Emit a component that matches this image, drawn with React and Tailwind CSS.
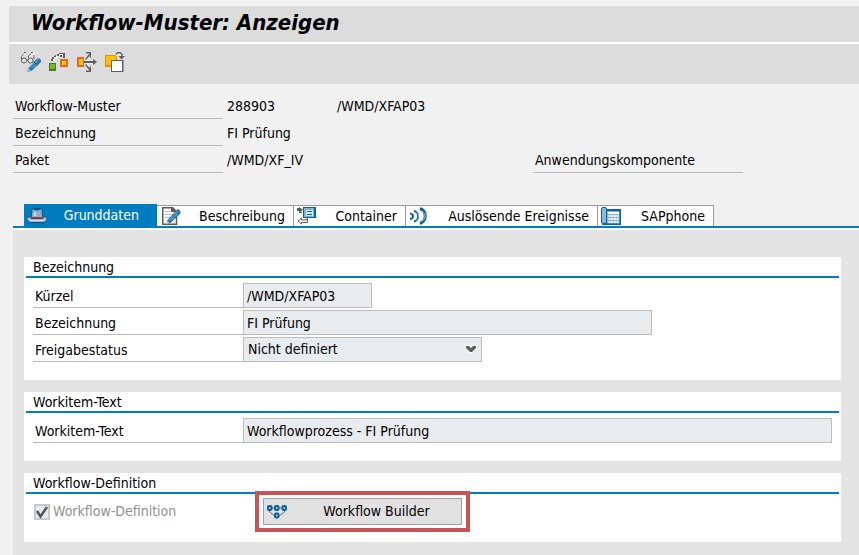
import React, { useState } from "react";

const GlassesPencilIcon = () => (
  <svg width="20" height="20" viewBox="0 0 20 20" fill="none">
    <path d="M1 7V4L3.500 1H5M9 7V4L11 1H13V5" stroke="#f4f4f4" strokeWidth="2" />
    <circle cx="3" cy="8.500" r="2.500" fill="#e8e8e8" stroke="#5a5a5a" />
    <circle cx="9.500" cy="8.500" r="2.500" fill="#e8e8e8" stroke="#5a5a5a" />
    <path d="M.5 8V4.500L3 1.500M3 .5h2M7 8H5.500M7.500 6V4L10 1.500M10 .5h2M13 3v4" stroke="#5a5a5a" />
    <path d="M6 20l1.500-4L16 6.500h2.500L20 8v2L11 18.500z" fill="#2c78a8" />
    <path d="M9 15.500l8-8M11.500 16l4-4" stroke="#7db4d8" />
    <path d="M6 20l1.500-3.500L9.500 18z" fill="#a9cbe0" />
    <path d="M12.500 9.500l4 4" stroke="#1d5f8c" />
  </svg>
);

const WhereUsedIcon = () => (
  <svg width="20" height="20" viewBox="0 0 20 20" fill="none" shapeRendering="crispEdges">
    <path d="M3 8h2v-2h2V4h2M10 2h5M12 4h1" stroke="#f4f4f4" />
    <path d="M2 7h2v2H2zM3 5h2v2H3zM5 4h2v1H5zM6 3h1v1H6zM8 2h2v2H8zM10 1h6v1h-6zM14 2h2v4h-2zM11 3h2v2h-2z" fill="#5f5f5f" />
    <path d="M0 11h7v8H0z" fill="#3d7a35" />
    <path d="M1 12h5v5H1z" fill="#7ab51d" />
    <path d="M11 7h8v8h-8z" fill="#de6a26" />
    <path d="M13 9h4v4h-4z" fill="#fdc316" />
  </svg>
);

const DistributeIcon = () => (
  <svg width="20" height="20" viewBox="0 0 20 20" fill="none">
    <path d="M8 8l5-6M8 12l5 6M8 10h9" stroke="#f4f4f4" strokeWidth="3" />
    <path d="M0 5h7v10H0z" fill="#de6a26" />
    <path d="M2 7h4v6H2z" fill="#fdc316" />
    <path d="M8.500 7.500L13 2M8.500 12.500L13 18" stroke="#5f5f5f" strokeWidth="1.500" />
    <path d="M7 9h9v2H7z" fill="#5f5f5f" />
    <path d="M9 0h5v5.500h-1.500V1.500H9zM9 20h5v-5.500h-1.500v4H9zM16 7l4 3-4 3z" fill="#5f5f5f" />
  </svg>
);

const CopyObjectIcon = () => (
  <svg width="20" height="20" viewBox="0 0 20 20" fill="none">
    <path d="M0 3h12v12H0z" fill="#f08a00" />
    <path d="M1 4h10v9H1z" fill="#fdc300" />
    <path d="M11 3.500l1.500-2h3L17 3v2" stroke="#f4f4f4" strokeWidth="3" />
    <path d="M11 2.500L12.500.750h3L17 2.500V5" stroke="#5f5f5f" strokeWidth="1.500" />
    <path d="M13.500 4H20l-3.500 3.500z" fill="#5f5f5f" />
    <path d="M6 8h12.500v12H6z" fill="#5f5f5f" />
    <path d="M7 9h10v10H7z" fill="#fff" />
  </svg>
);

const HatIcon = () => (
  <svg width="20" height="18" viewBox="0 0 20 18" fill="none">
    <path d="M0 11l2-1.500 3 1h10l3-1 2 1.500v2l-3 2.500H3L0 13z" fill="#8fb9d8" stroke="#0b4f7d" />
    <path d="M4 11.500L5 3l1-1.500h8L15 3l1 8.500z" fill="#86b3d4" stroke="#0b4f7d" />
    <path d="M6 1.500c1 2.500 7 2.500 8 0z" fill="#0b4f7d" />
    <path d="M8 5v4" stroke="#c5dff0" strokeWidth="2" />
    <path d="M4 9l1 1h10l1-1v2.500H4z" fill="#c8321e" />
    <path d="M1.500 12.500L4 13.500h12l2.500-1" stroke="#d5e6f2" />
  </svg>
);

const DocPencilIcon = () => (
  <svg width="20" height="18" viewBox="0 0 20 18" fill="none">
    <path d="M.75.75H10.500L14.500 5v12.250H.75z" fill="#fff" stroke="#5a5a5a" strokeWidth="1.500" />
    <path d="M9 0h2l4.500 5H9z" fill="#5a5a5a" />
    <path d="M3 4.500h5M3 7.500h6M3 10.500h5" stroke="#b5b5b5" />
    <path d="M4 17.500L5.500 13 14 3.500l2-1.500L18.500 4v2.500L8.500 16z" fill="#2c78a8" />
    <path d="M7 13.500l8-9M9.500 13l6-6" stroke="#7db4d8" />
    <path d="M4 17.500l1.300-3.500 2.200 2z" fill="#b9d4e6" />
    <path d="M10 7.500l4 4" stroke="#1d5f8c" />
  </svg>
);

const ContainerIcon = () => (
  <svg width="20" height="18" viewBox="0 0 20 18" fill="none">
    <path d="M6 0h13v11H6z" fill="#0b6397" />
    <path d="M7 1h10v9H7z" fill="#86b3d4" />
    <path d="M9 3h7v6H9z" fill="#d6e7f3" />
    <path d="M10 4h5v1h-5zM10 7h5v1h-5z" fill="#0b6397" />
    <path d="M0 1h2V0l4 2.750L2 6V4H0zM2 5h3v1H2z" fill="#5a5a5a" />
    <path d="M1 14l3.500-3v2H9l1.500-1.500v4H4.500v1.500z" fill="#fff" stroke="#5a5a5a" />
  </svg>
);

const EventsIcon = () => (
  <svg width="20" height="18" viewBox="0 0 20 18" fill="none">
    <path d="M0 6.500c4 .5 4 5 0 5.500M4 4c5.500 1 5.500 9.500 0 10.500" stroke="#0b6397" strokeWidth="2" />
    <path d="M10 1.500c7 3 7 12 0 15" stroke="#0b6397" strokeWidth="3" />
    <path d="M6.500 4.500c3 3 3 6.500 0 9.500M12 4c4 3.500 4 7 0 10.500" stroke="#a2c5e0" />
  </svg>
);

const PhoneIcon = () => (
  <svg width="20" height="18" viewBox="0 0 20 18" fill="none">
    <path d="M4 2h16v16H1z" fill="#0b6397" />
    <path d="M6 4h12.500v12.500H6z" fill="#86b3d4" />
    <rect x=".5" y=".5" width="5" height="16" rx="1.500" fill="#8fb9d8" stroke="#0b6397" />
    <path d="M7 5h11v2H7z" fill="#fff" />
    <path d="M7.500 9h10M7.500 12h10M7.500 15h10" stroke="#fff" strokeWidth="2" strokeDasharray="2 .666" />
  </svg>
);

const WorkflowIcon = () => (
  <svg width="20" height="16" viewBox="0 0 20 16" fill="none">
    <path d="M2.500 4H18M2.500 5v3L8 12M17.500 5v3L12 12" stroke="#6b6b6b" />
    <g fill="#a2cbe6" stroke="#0b6397" strokeWidth="2">
      <rect x="1" y="2" width="3.500" height="4" rx="1" />
      <rect x="8" y="2" width="3.500" height="4" rx="1" />
      <rect x="15.500" y="2" width="3.500" height="4" rx="1" />
      <rect x="8" y="9.500" width="3.500" height="4" rx="1" />
    </g>
  </svg>
);

const toolbar = [
  { label: "Anzeigen <-> Ändern", icon: <GlassesPencilIcon /> },
  { label: "Verwendungsnachweis", icon: <WhereUsedIcon /> },
  { label: "Verteilen", icon: <DistributeIcon /> },
  { label: "Kopieren", icon: <CopyObjectIcon /> },
];

const tabs = [
  { id: "grund", label: "Grunddaten", icon: <HatIcon />, width: "w-[133px] pl-[3px] pr-[18px]" },
  { id: "beschr", label: "Beschreibung", icon: <DocPencilIcon />, width: "w-[137px] pl-[5px] pr-2" },
  { id: "cont", label: "Container", icon: <ContainerIcon />, width: "w-[112px] pl-[3px] pr-2" },
  { id: "events", label: "Auslösende Ereignisse", icon: <EventsIcon />, width: "w-[192px] pl-1 pr-2" },
  { id: "phone", label: "SAPphone", icon: <PhoneIcon />, width: "w-[116px] pl-[3px] pr-2" },
];

const HeaderLabel = ({ children }) => (
  <div className="h-[26px] w-[210px] shrink-0 border-b border-[#b9b9b9] pl-[2px]">{children}</div>
);

const Panel = ({ title, children }) => (
  <section className="bg-white pb-[18px]">
    <h2 className="mx-[2px] h-[21px] border-b-2 border-[#007cc0] pl-[7px] leading-[20px]">{title}</h2>
    <div className="flex flex-col gap-[2px] px-[9px] pt-[5px]">{children}</div>
  </section>
);

const Row = ({ id, label, children }) => (
  <div className="flex h-[25px]">
    <label
      htmlFor={id}
      className="w-[210px] shrink-0 border-b border-[#b9b9b9] pl-[2px] leading-[26px]"
    >
      {label}
    </label>
    {children}
  </div>
);

const inputClass = "h-[25px] min-w-0 border border-[#bdbdbd] bg-[#e8ecef] px-[3px] outline-none";

const App = () => {
  const [activeTab, setActiveTab] = useState("grund");

  return (
    <div className="flex min-h-screen flex-col bg-[#f1f1f1] font-['DejaVu_Sans_Condensed','Noto_Sans',sans-serif] text-[14px] text-black">
      <header className="mt-[6px] ml-[9px]">
        <div className="h-9 bg-[#dcdcdc] pl-[22px]">
          <h1 className="text-[22px] leading-[34px] font-bold italic">Workflow-Muster: Anzeigen</h1>
        </div>
        <div className="flex h-[42px] items-center gap-2 border-t-2 border-white bg-[#dcdcdc] pb-1 pl-3">
          {toolbar.map((item) => (
            <button key={item.label} type="button" title={item.label} aria-label={item.label}>
              {item.icon}
            </button>
          ))}
        </div>
      </header>

      <div className="mt-[9px] ml-[13px] flex flex-col gap-px leading-[27px]">
        <div className="flex h-[26px]">
          <HeaderLabel>Workflow-Muster</HeaderLabel>
          <span className="w-[110px] pl-1">288903</span>
          <span className="pl-1">/WMD/XFAP03</span>
        </div>
        <div className="flex h-[26px]">
          <HeaderLabel>Bezeichnung</HeaderLabel>
          <span className="pl-1">FI Prüfung</span>
        </div>
        <div className="flex h-[26px]">
          <HeaderLabel>Paket</HeaderLabel>
          <span className="w-[310px] pl-1">/WMD/XF_IV</span>
          <HeaderLabel>Anwendungskomponente</HeaderLabel>
        </div>
      </div>

      <div role="tablist" className="mt-[31px] ml-[13px] flex items-end border-b-2 border-[#007cc0] pl-[11px]">
        {tabs.map((tab) => (
          <button
            key={tab.id}
            type="button"
            role="tab"
            aria-selected={activeTab === tab.id}
            onClick={() => setActiveTab(tab.id)}
            className={`flex items-center justify-between leading-[21px] whitespace-nowrap ${tab.width} ${
              activeTab === tab.id
                ? "h-[22px] bg-[#007cc0] pt-px text-white"
                : "h-[21px] border-t border-r border-[#9b9b9b] bg-white"
            }`}
          >
            {tab.icon}
            <span>{tab.label}</span>
          </button>
        ))}
      </div>

      <main className="ml-[13px] flex flex-1 flex-col gap-3 border-t-2 border-white bg-[#e4e4e4] pt-[27px] pr-[18px] pb-[13px] pl-[11px]">
        <Panel title="Bezeichnung">
          <Row id="kuerzel" label="Kürzel">
            <input id="kuerzel" readOnly value="/WMD/XFAP03" className={`${inputClass} w-[129px]`} />
          </Row>
          <Row id="bezeichnung" label="Bezeichnung">
            <input id="bezeichnung" readOnly value="FI Prüfung" className={`${inputClass} w-[409px]`} />
          </Row>
          <Row id="status" label="Freigabestatus">
            <div className="relative">
              <select
                id="status"
                defaultValue="nd"
                className={`${inputClass} w-[239px] appearance-none pl-1`}
              >
                <option value="nd">Nicht definiert</option>
              </select>
              <svg
                className="pointer-events-none absolute top-[7px] right-[5px]"
                width="12"
                height="9"
                viewBox="0 0 12 9"
              >
                <path d="M0 1h5l1 1 1-1h5v3L7 9H5L0 4z" fill="#fff" />
                <path d="M1 2h3l2 2 2-2h3v2L7 8H5L1 4z" fill="#5f5f5f" />
              </svg>
            </div>
          </Row>
        </Panel>

        <Panel title="Workitem-Text">
          <Row id="workitem" label="Workitem-Text">
            <input
              id="workitem"
              readOnly
              value="Workflowprozess - FI Prüfung"
              className={`${inputClass} flex-1`}
            />
          </Row>
        </Panel>

        <Panel title="Workflow-Definition">
          <div className="flex h-[25px] items-center">
            <label className="flex h-[25px] w-[230px] items-center gap-[3px] pl-px text-[#8f8f8f]">
              <span className="relative h-4 w-4">
                <input
                  type="checkbox"
                  defaultChecked
                  disabled
                  className="block h-4 w-4 appearance-none border-2 border-[#c8c8c8] bg-[#e8ecef]"
                />
                <svg
                  className="pointer-events-none absolute inset-0"
                  width="16"
                  height="16"
                  viewBox="0 0 16 16"
                  fill="none"
                >
                  <path d="M3 7l3.500 5.500L13 3" stroke="#555" strokeWidth="2.500" />
                </svg>
              </span>
              Workflow-Definition
            </label>
            <div className="relative h-[27px] w-[199px]">
              <div className="pointer-events-none absolute -inset-x-2 -inset-y-[7px] border-4 border-[#c95457] bg-white" />
              <button
                type="button"
                className="relative flex h-[27px] w-full items-center border border-[#a0a0a0] bg-[#e1e1e1] pl-[3px]"
              >
                <WorkflowIcon />
                <span className="flex-1 pl-[5px] text-center">Workflow Builder</span>
              </button>
            </div>
          </div>
        </Panel>
      </main>
    </div>
  );
};

export default App;
